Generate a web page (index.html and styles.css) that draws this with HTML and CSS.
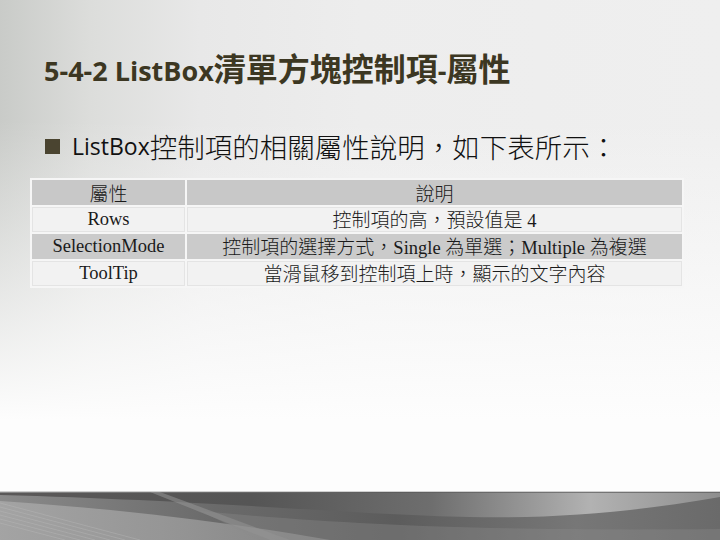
FILE: index.html
```html
<!DOCTYPE html>
<html lang="zh-Hant">
<head>
<meta charset="utf-8">
<link rel="stylesheet" href="styles.css">
</head>
<body>
<div class="slide">
  <main class="content">
    <h1 class="title"><span class="lat">5-4-2 ListBox</span><span class="cjk">清單方塊控制項</span><span class="lat">-</span><span class="cjk">屬性</span></h1>
    <p class="bullet"><span class="square"></span><span class="lat">ListBox</span><span class="cjk">控制項的相關屬性說明，如下表所示：</span></p>
    <table class="props">
      <colgroup><col class="c1"><col class="c2"></colgroup>
      <thead>
        <tr class="head"><th>屬性</th><th>說明</th></tr>
      </thead>
      <tbody>
        <tr class="light"><td>Rows</td><td><span class="k">控制項的高，預設值是</span> 4</td></tr>
        <tr class="dark"><td>SelectionMode</td><td><span class="k">控制項的選擇方式，</span>Single <span class="k">為單選；</span>Multiple <span class="k">為複選</span></td></tr>
        <tr class="light"><td>ToolTip</td><td><span class="k">當滑鼠移到控制項上時，顯示的文字內容</span></td></tr>
      </tbody>
    </table>
  </main>
  <footer class="band">
    <svg class="wave" viewBox="0 0 720 48" preserveAspectRatio="none" width="720" height="48">
      <defs>
        <linearGradient id="g1" x1="0" y1="0" x2="1" y2="0">
          <stop offset="0" stop-color="#8a8a8a"/>
          <stop offset="0.3" stop-color="#6a6a6a"/>
          <stop offset="0.55" stop-color="#5c5c5c"/>
          <stop offset="0.8" stop-color="#777"/>
          <stop offset="1" stop-color="#6a6a6a"/>
        </linearGradient>
        <linearGradient id="g2" x1="0" y1="0" x2="1" y2="0">
          <stop offset="0" stop-color="#5a5858"/>
          <stop offset="0.35" stop-color="#555"/>
          <stop offset="0.6" stop-color="#6e6e6e"/>
          <stop offset="0.82" stop-color="#b2b2b2"/>
          <stop offset="1" stop-color="#8e8e8e"/>
        </linearGradient>
        <linearGradient id="g3" x1="0" y1="0" x2="1" y2="0">
          <stop offset="0" stop-color="#a8a8a8"/>
          <stop offset="0.5" stop-color="#9c9c9c"/>
          <stop offset="1" stop-color="#8a8a8a"/>
        </linearGradient>
      </defs>
      <rect width="720" height="48" fill="url(#g1)"/>
      <path d="M0 1 L720 1 L720 5 C640 19 560 27 470 25 C360 23 220 9 0 3 Z" fill="url(#g2)"/>
      <path d="M0 9 C120 17 220 29 330 48 L0 48 Z" fill="url(#g3)" opacity="0.85"/>
      <path d="M160 0 L290 48 L270 48 L150 0 Z" fill="#9a9a9a" opacity="0.5"/>
      <path d="M200 19 C350 33 480 39 720 37 L720 48 L260 48 Z" fill="#8c8c8c" opacity="0.35"/>
      <g stroke="#bdbdbd" stroke-width="0.6" opacity="0.6">
        <line x1="0" y1="11" x2="140" y2="48"/>
        <line x1="0" y1="15" x2="125" y2="48"/>
        <line x1="0" y1="19" x2="110" y2="48"/>
        <line x1="0" y1="23" x2="95" y2="48"/>
        <line x1="0" y1="27" x2="80" y2="48"/>
        <line x1="0" y1="31" x2="65" y2="48"/>
      </g>
    </svg>
  </footer>
</div>
</body>
</html>
```
FILE: styles.css
```css
html, body {
  margin: 0;
  padding: 0;
}
body {
  width: 720px;
  height: 540px;
  overflow: hidden;
}
.slide {
  width: 720px;
  height: 540px;
  display: flex;
  flex-direction: column;
  background:
    linear-gradient(to bottom, rgba(255,255,255,0) 0px, rgba(255,255,255,0) 120px, rgba(253,253,253,1) 420px),
    linear-gradient(to right, #c9cbc8 0px, #dcdddb 90px, #e8e8e8 200px, #ededed 360px, #efefef 720px);
}
.content {
  flex: 1;
  padding: 45px 0 0 32px;
}
.title {
  margin: 0 0 0 12px;
  height: 44px;
  color: #3c3722;
  font-weight: 700;
  white-space: nowrap;
  line-height: 44px;
}
.title .lat {
  font-family: "Open Sans", "Liberation Sans", sans-serif;
  font-size: 27px;
}
.title .cjk {
  font-family: "Noto Sans CJK TC", sans-serif;
  font-size: 32px;
  font-weight: 700;
}
.bullet {
  margin: 40px 0 0 13px;
  display: flex;
  align-items: center;
  height: 34px;
  white-space: nowrap;
  color: #111;
}
.square {
  width: 15px;
  height: 15px;
  background: #4a4430;
  margin-right: 12px;
}
.bullet .lat {
  font-family: "Open Sans", "Liberation Sans", sans-serif;
  font-size: 23px;
}
.bullet .cjk {
  font-family: "Noto Sans CJK TC", sans-serif;
  font-size: 27.5px;
  font-weight: 300;
}
.props {
  margin-top: 15px;
  margin-left: -2px;
  border-collapse: separate;
  border-spacing: 2px;
  background: #f6f6f6;
  width: 654px;
  table-layout: fixed;
  font-family: "Liberation Serif", "Noto Sans CJK TC", serif;
  font-size: 18.5px;
  color: #1a1a1a;
}
.c1 { width: 153px; }
.props th, .props td {
  height: 25px;
  padding: 0;
  text-align: center;
  vertical-align: middle;
  font-weight: 400;
  white-space: nowrap;
  line-height: 1;
}
.props .k {
  font-family: "Noto Sans CJK TC", sans-serif;
  font-size: 19px;
  font-weight: 300;
  line-height: 1;
}
.head th {
  background: #c8c8c8;
  font-family: "Noto Sans CJK TC", sans-serif;
  font-size: 19px;
  font-weight: 300;
}
.light td {
  background: #f2f2f2;
  box-shadow: inset 0 0 0 1px #e4e4e4;
}
.dark td {
  background: #cbcbcb;
}
.band {
  height: 48px;
  border-top: 1px solid #d0d0d0;
  display: flex;
}
.wave {
  display: block;
}
```
